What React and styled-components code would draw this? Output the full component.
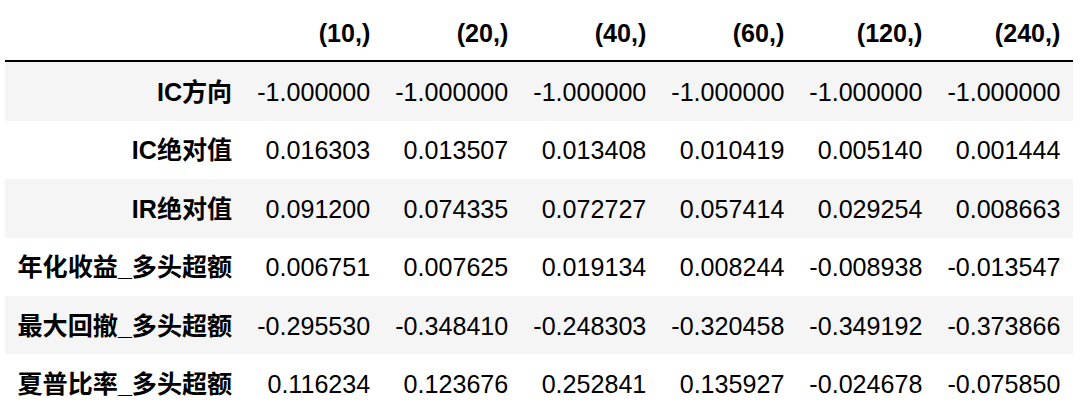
import React from 'react';
import styled, { createGlobalStyle } from 'styled-components';

const GlobalStyle = createGlobalStyle`
  body {
    margin: 0;
    background: #fff;
  }
`;

const Wrapper = styled.div`
  padding: 2px 0 0 5px;
`;

const Table = styled.table`
  border-collapse: collapse;
  border-spacing: 0;
  border: none;
  color: #000;
  font-family: 'Liberation Sans', Arial, 'Noto Sans CJK SC', sans-serif;
  font-size: 25.1px;
`;

const Head = styled.thead`
  border-bottom: 2px solid #000;
  vertical-align: bottom;
`;

const Row = styled.tr`
  &:nth-child(odd) {
    background: #f5f5f5;
  }
`;

const HeadCell = styled.th`
  text-align: right;
  font-weight: bold;
  padding: 14.5px 12.5px 10.5px;
  line-height: 33.4px;
  white-space: nowrap;
`;

const IndexCell = styled.th`
  text-align: right;
  font-weight: bold;
  padding: 13.5px 12.5px 11.5px;
  line-height: 33.4px;
  white-space: nowrap;
  vertical-align: middle;
`;

const Cell = styled.td`
  text-align: right;
  padding: 13.5px 12.5px 11.5px;
  line-height: 33.4px;
  white-space: nowrap;
  vertical-align: middle;
`;

const columns = ['(10,)', '(20,)', '(40,)', '(60,)', '(120,)', '(240,)'];

const rows = [
  ['IC方向', ['-1.000000', '-1.000000', '-1.000000', '-1.000000', '-1.000000', '-1.000000']],
  ['IC绝对值', ['0.016303', '0.013507', '0.013408', '0.010419', '0.005140', '0.001444']],
  ['IR绝对值', ['0.091200', '0.074335', '0.072727', '0.057414', '0.029254', '0.008663']],
  ['年化收益_多头超额', ['0.006751', '0.007625', '0.019134', '0.008244', '-0.008938', '-0.013547']],
  ['最大回撤_多头超额', ['-0.295530', '-0.348410', '-0.248303', '-0.320458', '-0.349192', '-0.373866']],
  ['夏普比率_多头超额', ['0.116234', '0.123676', '0.252841', '0.135927', '-0.024678', '-0.075850']],
];

function App() {
  return (
    <Wrapper>
      <GlobalStyle />
      <Table>
        <Head>
          <tr>
            <HeadCell />
            {columns.map((c) => (
              <HeadCell key={c}>{c}</HeadCell>
            ))}
          </tr>
        </Head>
        <tbody>
          {rows.map(([label, values]) => (
            <Row key={label}>
              <IndexCell>{label}</IndexCell>
              {values.map((v, i) => (
                <Cell key={i}>{v}</Cell>
              ))}
            </Row>
          ))}
        </tbody>
      </Table>
    </Wrapper>
  );
}

export default App;
